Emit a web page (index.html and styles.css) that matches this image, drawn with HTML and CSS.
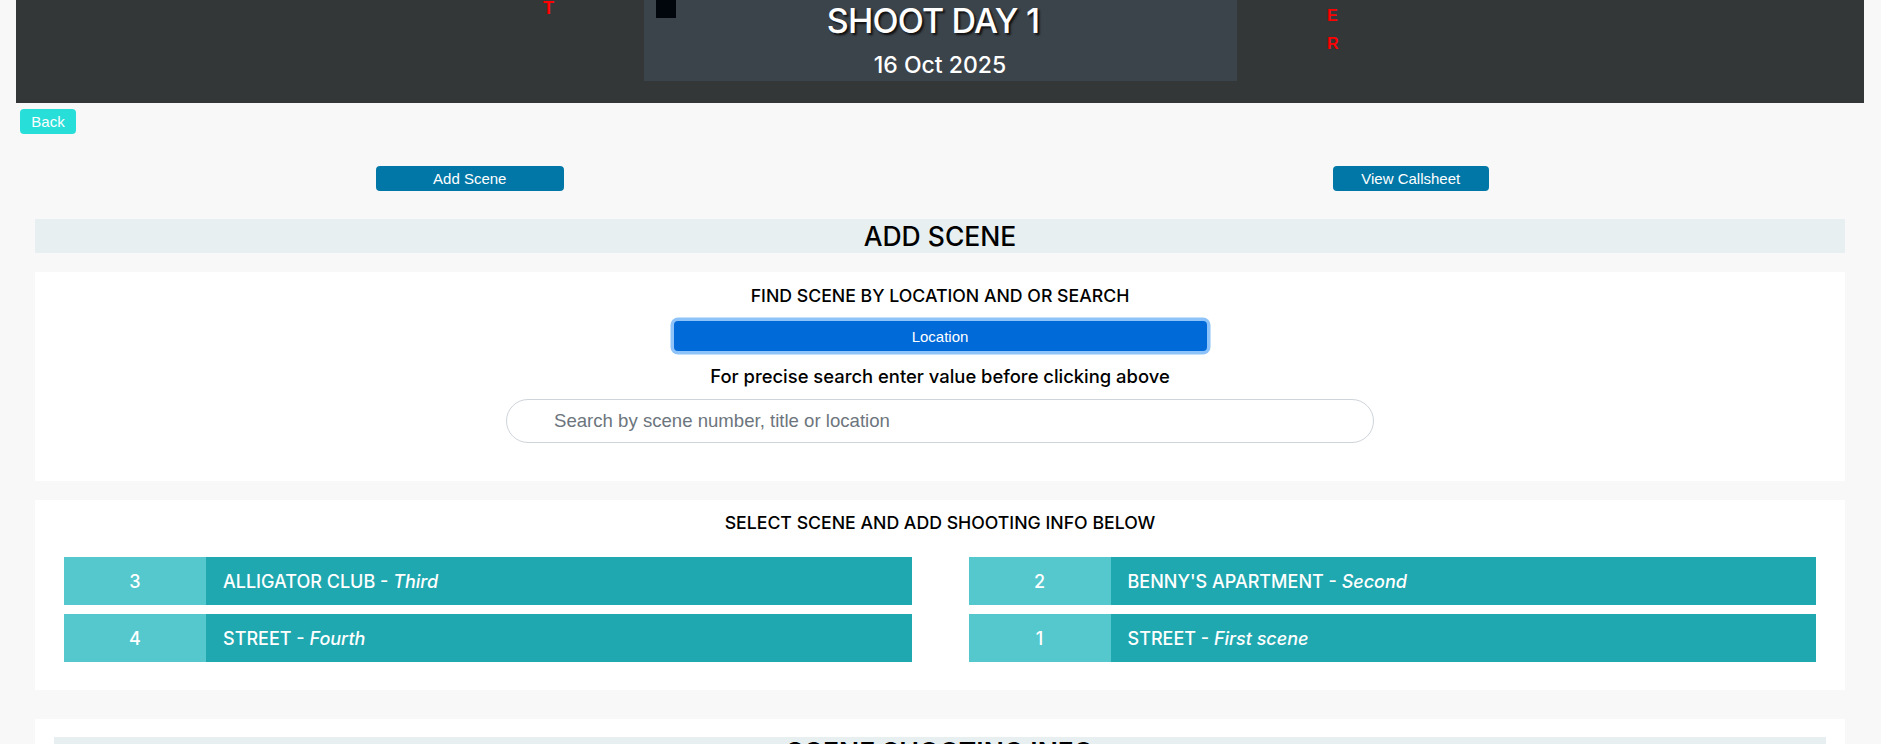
FILE: index.html
```html
<!DOCTYPE html>
<html lang="en">
<head>
<meta charset="utf-8">
<title>Shoot Day 1</title>
<link rel="stylesheet" href="styles.css">
</head>
<body>
<header class="topbar">
  <div class="day-box">
    <span class="day-mark"></span>
    <h1 class="day-title">SHOOT DAY 1</h1>
    <div class="day-date">16 Oct 2025</div>
  </div>
  <span class="red-letter red-t">T</span>
  <span class="red-letter red-e">E</span>
  <span class="red-letter red-r">R</span>
</header>

<button class="btn-back">Back</button>

<div class="action-row">
  <div class="action-cell"><button class="btn-action btn-add">Add Scene</button></div>
  <div class="action-cell"><button class="btn-action btn-view">View Callsheet</button></div>
</div>

<main class="main">
  <h2 class="band">ADD SCENE</h2>

  <section class="card card-find">
    <h3 class="card-heading heading-find">FIND SCENE BY LOCATION AND OR SEARCH</h3>
    <button class="btn-location">Location</button>
    <p class="hint">For precise search enter value before clicking above</p>
    <input class="search" type="text" placeholder="Search by scene number, title or location">
  </section>

  <section class="card card-select">
    <h3 class="card-heading heading-select">SELECT SCENE AND ADD SHOOTING INFO BELOW</h3>
    <div class="scene-grid">
      <div class="scene-col">
        <div class="scene-row"><div class="scene-num">3</div><div class="scene-name">ALLIGATOR CLUB - <em>Third</em></div></div>
        <div class="scene-row"><div class="scene-num">4</div><div class="scene-name">STREET - <em>Fourth</em></div></div>
      </div>
      <div class="scene-col">
        <div class="scene-row"><div class="scene-num">2</div><div class="scene-name">BENNY'S APARTMENT - <em>Second</em></div></div>
        <div class="scene-row"><div class="scene-num">1</div><div class="scene-name">STREET - <em>First scene</em></div></div>
      </div>
    </div>
  </section>

  <section class="card card-info">
    <h2 class="band band-info">SCENE SHOOTING INFO</h2>
  </section>
</main>
</body>
</html>
```
FILE: styles.css
```css
* { box-sizing: border-box; }

body {
  margin: 0;
  background: #f8f8f8;
  font-family: Inter, "Liberation Sans", sans-serif;
  color: #000;
}

/* header */
.topbar {
  position: relative;
  margin: 0 17px 0 16px;
  height: 103px;
  background: #343738;
  display: flex;
  justify-content: center;
  align-items: flex-start;
}

.red-letter {
  position: absolute;
  color: #ff0000;
  font-family: "Liberation Sans", sans-serif;
  font-weight: 700;
  line-height: 1;
}
.red-t { left: 527px; top: -1px; font-size: 18px; }
.red-e { left: 1311px; top: 8px; font-size: 16px; }
.red-r { left: 1311px; top: 35.5px; font-size: 16px; }

.day-box {
  position: relative;
  width: 593px;
  height: 81px;
  background: #3b434b;
  display: flex;
  flex-direction: column;
  align-items: center;
  color: #fff;
}

.day-mark {
  position: absolute;
  left: 12px;
  top: 0;
  width: 20px;
  height: 18px;
  background: #00060c;
}

.day-title {
  margin: 0 14px 0 0;
  font-size: 34px;
  font-weight: 500;
  line-height: 41px;
  letter-spacing: -0.8px;
  text-shadow: 2px 2px 2px #111;
}

.day-date {
  margin-top: 9px;
  font-size: 23px;
  font-weight: 500;
  line-height: 30px;
}

/* back */
.btn-back {
  display: block;
  margin: 6px 0 0 20px;
  width: 56px;
  height: 25px;
  padding: 0;
  border: none;
  border-radius: 4px;
  background: #27ded8;
  color: #fff;
  font-family: "Liberation Sans", sans-serif;
  font-size: 15px;
}

/* actions */
.action-row {
  display: grid;
  grid-template-columns: 1fr 1fr;
  margin-top: 32px;
}
.action-cell {
  display: flex;
  justify-content: center;
}
.btn-action {
  height: 25px;
  padding: 0;
  border: none;
  border-radius: 4px;
  background: #0077a7;
  color: #fff;
  font-family: "Liberation Sans", sans-serif;
  font-size: 15px;
}
.btn-add { width: 188px; margin-left: -1px; }
.btn-view { width: 156px; }

/* main */
.main {
  margin: 28px 36px 0 35px;
}

.band {
  margin: 0;
  height: 34px;
  background: #e7eff1;
  text-align: center;
  font-size: 26.5px;
  font-weight: 500;
  line-height: 34px;
}

.card {
  background: #fff;
  margin-top: 19px;
}

.card-find {
  padding: 12px 0 38px;
  display: flex;
  flex-direction: column;
  align-items: center;
}

.card-heading {
  margin: 0;
  font-weight: 500;
  line-height: 24px;
  text-align: center;
}
.heading-find { font-size: 17.7px; }
.heading-select { font-size: 17.7px; }

.btn-location {
  margin-top: 13px;
  width: 533px;
  height: 30px;
  border: none;
  border-radius: 4px;
  background: #006ad9;
  color: #fff;
  font-family: "Liberation Sans", sans-serif;
  font-size: 15px;
  box-shadow: 0 0 0 3.5px #8ec3fa;
}

.hint {
  margin: 13px 0 0;
  font-size: 18.4px;
  font-weight: 500;
  line-height: 24px;
}

.search {
  margin-top: 11px;
  width: 868px;
  height: 44px;
  border: 1px solid #ced4da;
  border-radius: 22px;
  padding: 0 20px 0 47px;
  background: #fff;
  font-family: "Liberation Sans", sans-serif;
  font-size: 18.6px;
  color: #333;
}
.search::placeholder { color: #6c757d; }

.card-select {
  padding: 11px 29px 28px;
}
.scene-grid {
  margin-top: 22px;
  display: grid;
  grid-template-columns: 1fr 1fr;
  column-gap: 57px;
}
.scene-col {
  display: flex;
  flex-direction: column;
  gap: 9px;
}
.scene-row {
  display: flex;
  height: 48px;
  background: #1fa8b0;
  color: #fff;
  font-size: 18px;
  font-weight: 500;
}
.scene-num {
  width: 142px;
  background: #55c8cd;
  display: flex;
  align-items: center;
  justify-content: center;
}
.scene-name {
  padding-left: 17px;
  display: flex;
  align-items: center;
  white-space: pre;
}
.scene-name em { font-style: italic; }

.card-info {
  margin-top: 29px;
  padding: 18px 19px 40px;
}
.band-info {
  font-weight: 600;
  line-height: 30px;
}
```
